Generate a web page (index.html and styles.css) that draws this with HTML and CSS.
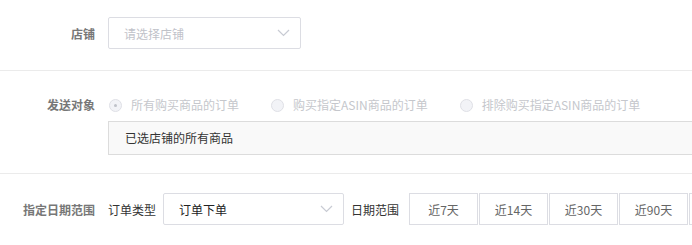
FILE: index.html
```html
<!DOCTYPE html>
<html lang="zh-CN">
<head>
<meta charset="UTF-8">
<title>发送设置</title>
<link rel="stylesheet" href="styles.css">
</head>
<body>

<div class="form">
  <!-- 店铺 -->
  <div class="row row-shop">
    <div class="label">店铺</div>
    <div class="field">
      <div class="select select-shop">
        <span class="placeholder">请选择店铺</span>
        <svg class="arrow" width="13" height="8" viewBox="0 0 13 8"><path d="M1 1 L6.5 6.5 L12 1" fill="none" stroke="#c8cbd3" stroke-width="1.2"/></svg>
      </div>
    </div>
  </div>

  <!-- 发送对象 -->
  <div class="row row-target">
    <div class="label">发送对象</div>
    <div class="field">
      <div class="radios">
        <label class="radio checked"><span class="dot"></span>所有购买商品的订单</label>
        <label class="radio"><span class="dot"></span>购买指定ASIN商品的订单</label>
        <label class="radio"><span class="dot"></span>排除购买指定ASIN商品的订单</label>
      </div>
      <div class="scope-box">已选店铺的所有商品</div>
    </div>
  </div>

  <!-- 指定日期范围 -->
  <div class="row row-date">
    <div class="label">指定日期范围</div>
    <div class="field inline">
      <span class="sub-label first">订单类型</span>
      <div class="select select-type">
        <span class="value">订单下单</span>
        <svg class="arrow" width="13" height="8" viewBox="0 0 13 8"><path d="M1 1 L6.5 6.5 L12 1" fill="none" stroke="#c8cbd3" stroke-width="1.2"/></svg>
      </div>
      <span class="sub-label">日期范围</span>
      <div class="ranges">
        <button>近7天</button>
        <button>近14天</button>
        <button>近30天</button>
        <button>近90天</button>
        <button>近180天</button>
      </div>
    </div>
  </div>
</div>

</body>
</html>
```

FILE: styles.css
```css
body { margin: 0; background: #fff; font-family: "Noto Sans CJK SC", "Microsoft YaHei", sans-serif; font-size: 12px; color: #333; overflow: hidden; }
.form { width: 900px; }
.row { display: flex; align-items: flex-start; border-bottom: 1px solid #ebebeb; }
.row:last-child { border-bottom: none; }
.label { width: 95px; flex-shrink: 0; text-align: right; color: #777; font-weight: bold; margin-right: 13px; }
.field { flex: 1; }
.inline { display: flex; align-items: center; }

.row-shop { padding: 17px 0 21px; align-items: center; }
.row-target { padding: 24px 0 18px; }
.row-target .label { line-height: 20px; }
.row-date { padding: 19px 0 21px; align-items: center; }

.select { box-sizing: border-box; height: 32px; border: 1px solid #dcdde3; border-radius: 2px; display: flex; align-items: center; justify-content: space-between; padding: 0 10px 0 15px; }
.select-shop { width: 193px; }
.select-type { width: 181px; margin-right: 7px; }
.placeholder { color: #bfc2c9; }
.value { color: #222; }

.radios { display: flex; line-height: 20px; height: 20px; }
.radio { display: flex; align-items: center; color: #c5c7cc; margin-right: 31px; }
.radio .dot { box-sizing: border-box; width: 13px; height: 13px; border: 1px solid #dfe0e6; border-radius: 50%; background: #f2f3f7; margin: 0 9px 0 1px; position: relative; }
.radio.checked .dot::after { content: ""; position: absolute; left: 4px; top: 4px; width: 3px; height: 3px; border-radius: 50%; background: #bfc2c9; }

.scope-box { box-sizing: border-box; margin-top: 6px; height: 34px; line-height: 32px; border: 1px solid #dcdcdc; background: #f9f9f9; padding-left: 16px; color: #333; }

.sub-label { color: #333; margin-right: 8px; }
.sub-label.first { margin-right: 7px; }
.ranges { display: flex; gap: 1px; margin-left: 2px; }
.ranges button { box-sizing: border-box; width: 69px; height: 32px; border: 1px solid #dcdde3; background: #fff; font-family: inherit; font-size: 12px; color: #666; padding: 0; }
```
